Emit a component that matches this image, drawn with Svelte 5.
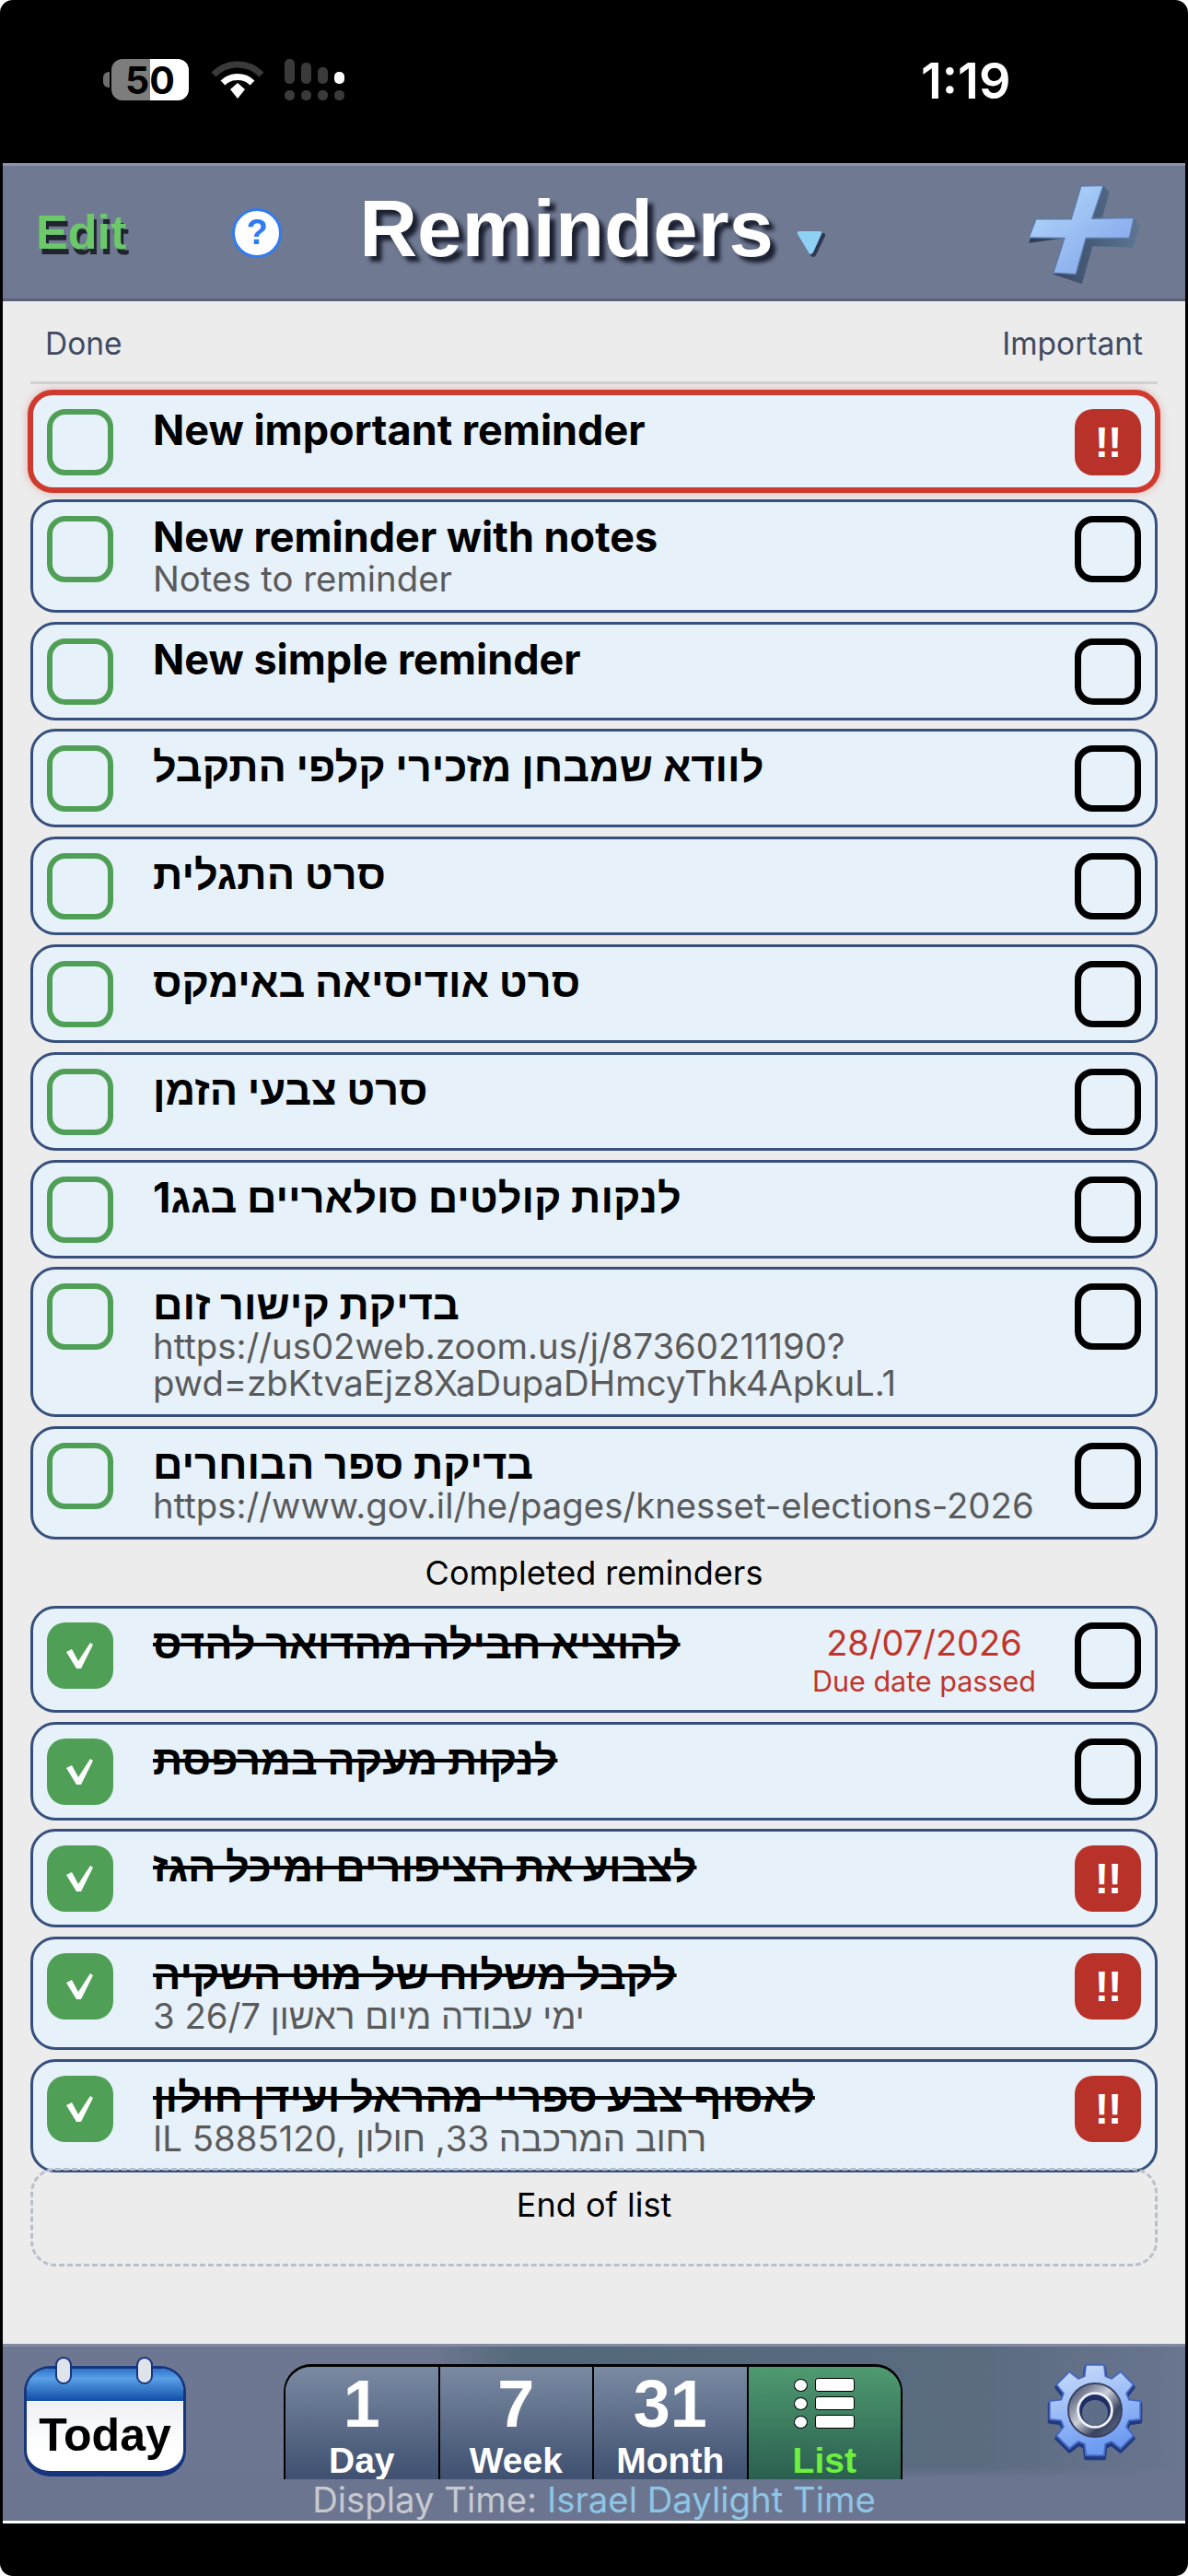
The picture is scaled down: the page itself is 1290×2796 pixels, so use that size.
<script>
  const active = [
    { title: 'New important reminder', urgent: true, alarm: true },
    { title: 'New reminder with notes', notes: ['Notes to reminder'] },
    { title: 'New simple reminder' },
    { title: 'לוודא שמבחן מזכירי קלפי התקבל' },
    { title: 'סרט התגלית' },
    { title: 'סרט אודיסיאה באימקס' },
    { title: 'סרט צבעי הזמן' },
    { title: 'לנקות קולטים סולאריים בגג1' },
    { title: 'בדיקת קישור זום', notes: ['https://us02web.zoom.us/j/87360211190?', 'pwd=zbKtvaEjz8XaDupaDHmcyThk4ApkuL.1'] },
    { title: 'בדיקת ספר הבוחרים', notes: ['https://www.gov.il/he/pages/knesset-elections-2026'] }
  ];

  const completed = [
    { title: 'להוציא חבילה מהדואר להדס', done: true, due: '28/07/2026' },
    { title: 'לנקות מעקה במרפסת', done: true },
    { title: 'לצבוע את הציפורים ומיכל הגז', done: true, urgent: true },
    { title: 'לקבל משלוח של מוט השקיה', done: true, urgent: true, notes: ['3 ימי עבודה מיום ראשון 26/7'] },
    { title: 'לאסוף צבע ספריי מהראל ועידן חולון', done: true, urgent: true, notes: ['IL 5885120, רחוב המרכבה 33, חולון'] }
  ];

  const tabs = [
    { num: '1', label: 'Day' },
    { num: '7', label: 'Week' },
    { num: '31', label: 'Month' }
  ];

  // eight rounded-ish teeth around the centre
  function gearPath(cx, cy, outer, inner) {
    const pts = [];
    for (let i = 0; i < 8; i++) {
      const a = (i * Math.PI) / 4 - Math.PI / 2;
      const step = [
        [-0.3, inner],
        [-0.2, outer],
        [0.2, outer],
        [0.3, inner]
      ];
      for (const [da, r] of step) {
        pts.push(`${(cx + r * Math.cos(a + da)).toFixed(1)} ${(cy + r * Math.sin(a + da)).toFixed(1)}`);
      }
    }
    return 'M' + pts.join('L') + 'Z';
  }
</script>

{#snippet reminder(item)}
  <div class="row" class:alarm={item.alarm}>
    <div class="check" class:checked={item.done}>
      {#if item.done}
        <svg viewBox="0 0 72 72" width="72" height="72"><polygon points="21,32 27,29 34,42 47,22 50,24 37,50 32,50" fill="#fff" /></svg>
      {/if}
    </div>
    <div class="text">
      <div class="title" class:struck={item.done}>{item.title}</div>
      {#each item.notes ?? [] as line}
        <div class="notes">{line}</div>
      {/each}
    </div>
    {#if item.due}
      <div class="due">
        <div class="due-date">{item.due}</div>
        <div class="due-note">Due date passed</div>
      </div>
    {/if}
    <div class="flag" class:on={item.urgent}>{item.urgent ? '!!' : ''}</div>
  </div>
{/snippet}

<div class="phone">
  <div class="status">
    <div class="battery">
      <span class="cap"></span>
      <span class="level">50</span>
    </div>
    <svg class="wifi" viewBox="0 0 58 42" width="58" height="42">
      <path d="M3 15 A36 36 0 0 1 55 15" fill="none" stroke="#3a3a3a" stroke-width="7" />
      <path d="M13 24 A23 23 0 0 1 45 24" fill="none" stroke="#fff" stroke-width="7" />
      <path d="M21 31 L29 24 L37 31 L29 41 Z" fill="#fff" />
    </svg>
    <div class="signal">
      <div class="bars">
        <i style="height: 27px"></i>
        <i style="height: 23px"></i>
        <i style="height: 18px"></i>
        <i class="lit" style="height: 13px"></i>
      </div>
      <div class="bars dots"><i></i><i></i><i></i><i></i></div>
    </div>
    <div class="clock">1:19</div>
  </div>

  <header class="topbar">
    <span class="edit">Edit</span>
    <span class="help">?</span>
    <span class="heading">Reminders</span>
    <svg class="caret" viewBox="0 0 32 32" width="32" height="32">
      <path d="M4 3 L28 3 Q31 3 30 6 L20 27 Q17 31 14 27 L2 6 Q1 3 4 3 Z" fill="#1d2740" opacity="0.8" transform="translate(2 2)" />
      <path d="M4 3 L26 3 Q29 3 28 6 L19 26 Q16 30 14 26 L2 6 Q1 3 4 3 Z" fill="#8fd0f5" />
    </svg>
    <svg class="plus" viewBox="170 30 380 340" width="127" height="113">
      <defs>
        <linearGradient id="plusFace" x1="0" y1="0" x2="1" y2="1">
          <stop offset="0" stop-color="#b4dcfb" />
          <stop offset="1" stop-color="#7f9fea" />
        </linearGradient>
        <linearGradient id="plusSide" x1="0" y1="0" x2="1" y2="0">
          <stop offset="0" stop-color="#2a3a55" />
          <stop offset="1" stop-color="#5e7793" />
        </linearGradient>
      </defs>
      <polygon points="352,42 425,40 445,62 420,150 525,145 545,172 522,242 390,238 355,362 262,330 298,212 182,228 205,150 320,150" fill="url(#plusSide)" />
      <polygon points="352,42 425,40 388,148 525,145 510,212 368,212 335,330 262,325 298,212 182,210 205,150 320,150" fill="url(#plusFace)" stroke="#5b7ba8" stroke-width="4" stroke-linejoin="round" />
    </svg>
  </header>

  <main class="content">
    <div class="columns">
      <span>Done</span>
      <span>Important</span>
    </div>

    <div class="list">
      {#each active as item}
        {@render reminder(item)}
      {/each}
      <div class="section">Completed reminders</div>
      {#each completed as item}
        {@render reminder(item)}
      {/each}
      <div class="end">End of list</div>
    </div>
  </main>

  <footer class="toolbar">
    <div class="tools">
      <div class="today">
        <span class="ring"></span>
        <span class="ring second"></span>
        <div class="today-top"></div>
        <div class="today-page">Today</div>
      </div>

      <div class="tabs">
        {#each tabs as tab}
          <div class="tab">
            <span class="num">{tab.num}</span>
            <span class="label">{tab.label}</span>
          </div>
        {/each}
        <div class="tab current">
          <div class="list-icon">
            {#each [0, 1, 2] as _}
              <div class="list-line"><i></i><b></b></div>
            {/each}
          </div>
          <span class="label">List</span>
        </div>
      </div>

      <svg class="gear" viewBox="0 0 120 120" width="116" height="116">
        <defs>
          <linearGradient id="gearFace" x1="0" y1="0" x2="0.3" y2="1">
            <stop offset="0" stop-color="#cfe0fc" />
            <stop offset="1" stop-color="#6d9bf2" />
          </linearGradient>
          <linearGradient id="gearRing" x1="0" y1="0" x2="1" y2="1">
            <stop offset="0" stop-color="#2c3454" />
            <stop offset="0.45" stop-color="#c9ced9" />
            <stop offset="0.7" stop-color="#39425f" />
            <stop offset="1" stop-color="#6b7590" />
          </linearGradient>
        </defs>
        <path d={gearPath(60, 63, 52, 40)} fill="#21397f" stroke="#21397f" stroke-width="4" stroke-linejoin="round" />
        <path d={gearPath(60, 60, 52, 40)} fill="url(#gearFace)" stroke="#4468c0" stroke-width="2" stroke-linejoin="round" />
        <circle cx="60" cy="60" r="30" fill="url(#gearRing)" stroke="#39415e" stroke-width="2" />
        <circle cx="60" cy="60" r="19" fill="#1f2f66" stroke="#eef1f7" stroke-width="3" />
        <circle cx="60" cy="63" r="14.5" fill="#5f6e88" />
      </svg>
    </div>
    <div class="display-time">Display Time: <span>Israel Daylight Time</span></div>
  </footer>
</div>

<style>
  :global(body) {
    background: #fff;
    font-family: Inter, "Liberation Sans", sans-serif;
  }

  .phone {
    width: 1290px;
    height: 2796px;
    box-sizing: border-box;
    padding: 0 3px;
    background: #000;
    border-radius: 14px;
    display: flex;
    flex-direction: column;
    padding-bottom: 57px;
    overflow: hidden;
  }

  /* status bar */
  .status {
    height: 177px;
    flex: none;
    position: relative;
    color: #fff;
    display: flex;
    align-items: flex-start;
    padding: 64px 0 0 118px;
    box-sizing: border-box;
  }

  .battery {
    width: 84px;
    height: 45px;
    border-radius: 12px;
    background: linear-gradient(90deg, #7d7d7d 50%, #fff 50%);
    position: relative;
    display: flex;
    align-items: center;
    justify-content: center;
  }

  .cap {
    position: absolute;
    left: -9px;
    top: 14px;
    width: 7px;
    height: 17px;
    border-radius: 6px 0 0 6px;
    background: #6d6d6d;
  }

  .level {
    font: 700 41px "Inter", sans-serif;
    color: #000;
  }

  .wifi {
    margin: 2px 0 0 24px;
  }

  .signal {
    margin-left: 22px;
    display: flex;
    flex-direction: column;
    gap: 7px;
  }

  .bars {
    display: flex;
    align-items: flex-end;
    gap: 7px;
  }

  .bars i {
    width: 11px;
    background: #3a3a3a;
    border-radius: 5px;
  }

  .bars .lit {
    background: #fff;
  }

  .dots i {
    height: 11px;
  }

  .clock {
    position: absolute;
    left: 997px;
    top: 55px;
    font: 600 54px "Inter", sans-serif;
  }

  /* top bar */
  .topbar {
    height: 150px;
    flex: none;
    box-sizing: border-box;
    background: #6f7992;
    border-top: 3px solid #8b93a9;
    border-bottom: 3px solid #5a6179;
    display: flex;
    align-items: center;
    font-family: "Liberation Sans", sans-serif;
    font-weight: 700;
    color: #fff;
  }

  .edit {
    margin-left: 36px;
    font-size: 52px;
    color: #6bc96a;
    text-shadow: 3px 6px 0 #20242e;
  }

  .help {
    margin: 2px 0 0 115px;
    width: 54px;
    height: 54px;
    box-sizing: border-box;
    border-radius: 50%;
    border: 3px solid #2f7bf0;
    background: #fff;
    color: #2f7bf0;
    font-size: 38px;
    line-height: 47px;
    text-align: center;
  }

  .heading {
    margin: -8px 0 0 84px;
    font-size: 87px;
    text-shadow: 6px 6px 4px #1b2030;
  }

  .caret {
    margin: 24px 0 0 24px;
  }

  .plus {
    margin: 4px 47px 0 auto;
  }

  /* list */
  .content {
    flex: 1;
    background: #ececec;
    padding: 0 30px;
    min-height: 0;
  }

  .columns {
    height: 90px;
    box-sizing: border-box;
    padding: 27px 16px 0 16px;
    display: flex;
    justify-content: space-between;
    font-size: 33.5px;
    line-height: 38px;
    color: #3f4a63;
    border-bottom: 3px solid #d2d2d2;
  }

  .list {
    margin-top: 9px;
    display: flex;
    flex-direction: column;
    gap: 9.8px;
  }

  .row {
    box-sizing: border-box;
    padding: 13px 15px 14px;
    background: #e6f1fa;
    border: 3px solid #364f7d;
    border-radius: 27px;
    display: flex;
    align-items: flex-start;
  }

  .row.alarm {
    margin: -3px -3px -3px;
    border: 6px solid #cf3a2e;
    box-shadow: 0 0 8px rgba(207, 58, 46, 0.35);
    padding-bottom: 13px;
  }

  .check,
  .flag {
    width: 72px;
    height: 72px;
    flex: none;
    box-sizing: border-box;
    margin-top: 2px;
    border-radius: 20px;
  }

  .check {
    border: 6px solid #4fa056;
  }

  .check.checked {
    border: 0;
    background: #4fa056;
  }

  .check svg {
    display: block;
  }

  .text {
    flex: 1;
    min-width: 0;
    margin-left: 43px;
  }

  .title {
    font-size: 45px;
    font-weight: 700;
    line-height: 50px;
    color: #000;
  }

  .struck {
    text-decoration: line-through;
    text-decoration-thickness: 4px;
  }

  .notes {
    font-size: 38.3px;
    line-height: 40px;
    color: #5a5a5a;
  }

  .due {
    margin: 4px 42px 0 0;
    text-align: center;
    color: #c0352b;
  }

  .due-date {
    font-size: 38px;
    line-height: 40px;
  }

  .due-note {
    margin-top: 5px;
    font-size: 30.5px;
    line-height: 34px;
  }

  .flag {
    border: 7px solid #000;
    font-family: "Liberation Sans", sans-serif;
    font-weight: 700;
    font-size: 46px;
    letter-spacing: -1px;
    line-height: 72px;
    text-align: center;
    color: #fff;
  }

  .flag.on {
    border: 0;
    background: #b83229;
  }

  .section {
    height: 52px;
    display: flex;
    align-items: center;
    justify-content: center;
    font-size: 36px;
    color: #000;
  }

  .end {
    box-sizing: border-box;
    height: 107px;
    margin-top: -15px;
    padding-top: 15px;
    border: 3px dashed #b9bfca;
    border-radius: 27px;
    text-align: center;
    font-size: 36px;
    line-height: 44px;
    color: #000;
    position: relative;
  }

  /* bottom bar */
  .toolbar {
    height: 195px;
    flex: none;
    box-sizing: border-box;
    border-top: 3px solid #838ba2;
    border-bottom: 3px solid #fff;
    background:
      linear-gradient(180deg, rgba(108, 117, 144, 0) 130px, #6c7590 144px),
      linear-gradient(90deg, #6e7791 0, #6e7791 36%, #53687a 44%, #5a6b80 82%, #6a7590 100%);
  }

  .tools {
    height: 144px;
    position: relative;
    display: flex;
    align-items: flex-start;
  }

  .today {
    position: relative;
    margin: 21px 0 0 23px;
    width: 176px;
    height: 120px;
    box-sizing: border-box;
    border: 3px solid #16357e;
    border-bottom-width: 6px;
    border-radius: 28px;
    overflow: visible;
    background: #fff;
  }

  .today-top {
    height: 35px;
    border-radius: 24px 24px 0 0;
    background: linear-gradient(180deg, #2e74c9 0, #5aa0e6 30%, #0f4fa8 100%);
  }

  .today-page {
    height: 72px;
    border-radius: 0 0 24px 24px;
    background: linear-gradient(180deg, #eef0f5, #fff 70%);
    border-top: 1px solid #fff;
    font: 700 50px/72px "Liberation Sans", sans-serif;
    text-align: center;
    color: #000;
  }

  .ring {
    position: absolute;
    left: 31px;
    top: -13px;
    width: 14px;
    height: 26px;
    border: 2px solid #16357e;
    border-radius: 9px;
    background: #dfe3ec;
  }

  .ring.second {
    left: 119px;
  }

  .tabs {
    margin: 19px 0 0 106px;
    width: 672px;
    height: 125px;
    box-sizing: border-box;
    border: 2px solid #000;
    border-bottom: 0;
    border-top-width: 3px;
    border-radius: 30px 30px 0 0;
    display: flex;
    overflow: hidden;
  }

  .tab {
    flex: 1;
    display: flex;
    flex-direction: column;
    align-items: center;
    background: linear-gradient(180deg, #7a8aa2, #3f5070);
    border-left: 2px solid #000;
    color: #fff;
    font-family: "Liberation Sans", sans-serif;
    font-weight: 700;
  }

  .tab:first-child {
    border-left: 0;
  }

  .num {
    font-size: 72px;
    line-height: 72px;
    margin-top: 4px;
    height: 80px;
  }

  .label {
    font-size: 39px;
    line-height: 40px;
  }

  .tab.current {
    background: linear-gradient(180deg, #4f9a70, #2a5f4f);
  }

  .current .label {
    color: #6df03f;
  }

  .list-icon {
    height: 84px;
    padding-top: 12px;
    box-sizing: border-box;
    display: flex;
    flex-direction: column;
    gap: 5px;
  }

  .list-line {
    display: flex;
    align-items: center;
    gap: 8px;
  }

  .list-line i {
    width: 15px;
    height: 14px;
    box-sizing: border-box;
    border: 1px solid #000;
    border-radius: 50%;
    background: #fff;
  }

  .list-line b {
    width: 43px;
    height: 15px;
    box-sizing: border-box;
    border: 1px solid #000;
    border-radius: 3px;
    background: #fff;
  }

  .gear {
    margin: 11px 0 0 151px;
  }

  .display-time {
    height: 45px;
    text-align: center;
    font-size: 38.3px;
    line-height: 44px;
    color: #c6c9d0;
  }

  .display-time span {
    color: #8ec5e6;
  }
</style>
